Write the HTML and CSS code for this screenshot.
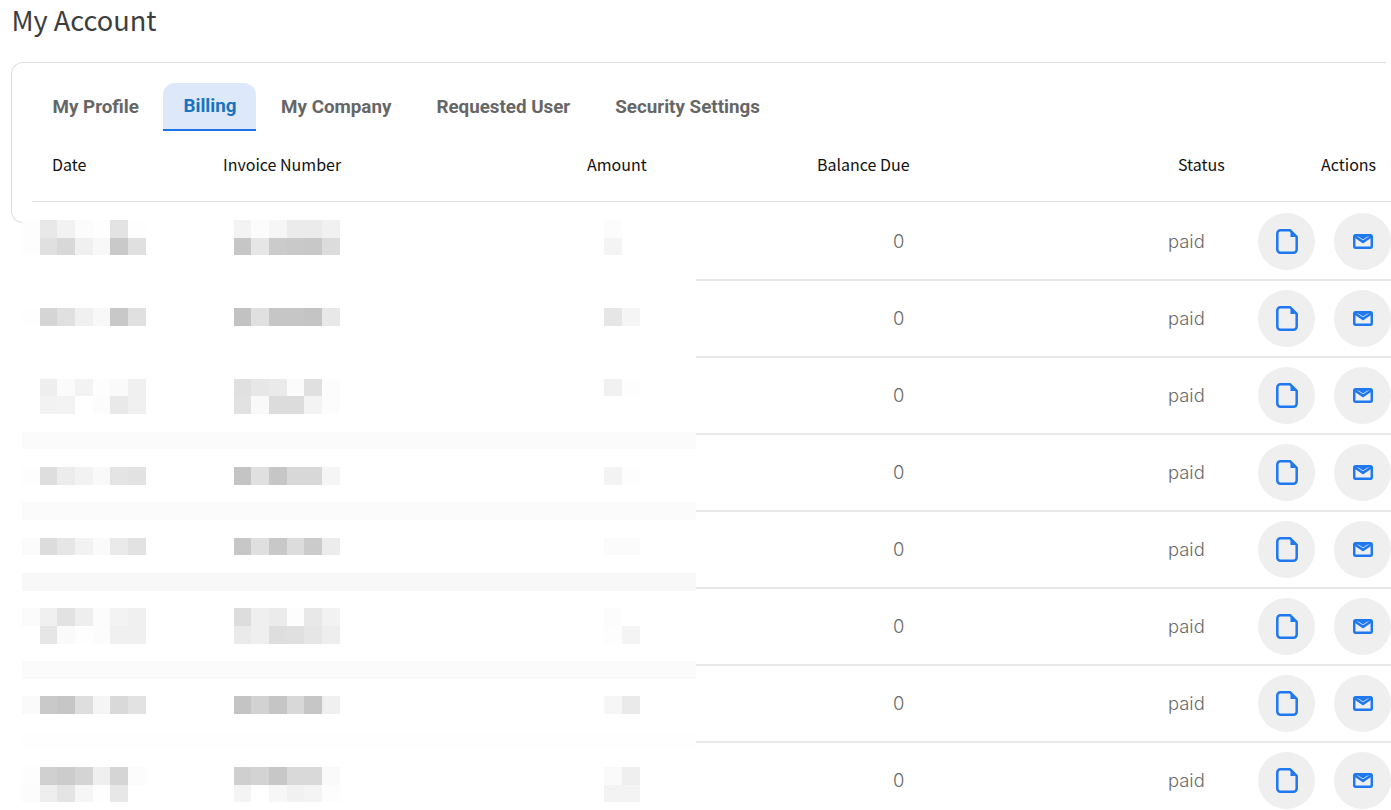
FILE: index.html
```html
<!DOCTYPE html>
<html lang="en">
<head>
<meta charset="utf-8">
<title>My Account</title>
<link rel="stylesheet" href="styles.css">
</head>
<body>
<svg class="defs" width="0" height="0" aria-hidden="true">
  <symbol id="doc" viewBox="0 0 22 25">
    <path class="ln" d="M4.500 1.300h9.700L20.700 7.800V20.500a3.200 3.200 0 0 1-3.200 3.200H4.500A3.200 3.200 0 0 1 1.300 20.500V4.500A3.200 3.200 0 0 1 4.500 1.300z"/>
    <path class="fl" d="M14.500 2.500L19.500 8H14.500z"/>
  </symbol>
  <symbol id="mail" viewBox="0 0 20 15">
    <rect class="ln" x="1.200" y="1.200" width="17.600" height="12.600" rx="1.500"/>
    <path class="ln" d="M2 2.500L10 7.900L18 2.500"/>
    <path class="fl" d="M4 1.500H16L10 5.500z"/>
  </symbol>
</svg>
<main class="page">
  <h1 class="title">My Account</h1>
  <section class="card">
    <nav class="tabs">
      <a class="tab">My Profile</a>
      <a class="tab active">Billing</a>
      <a class="tab">My Company</a>
      <a class="tab">Requested User</a>
      <a class="tab">Security Settings</a>
    </nav>
    <div class="table">
      <div class="head">
        <div>Date</div>
        <div>Invoice Number</div>
        <div>Amount</div>
        <div>Balance Due</div>
        <div class="h-status">Status</div>
        <div class="h-actions">Actions</div>
      </div>
      <div class="row"><div></div><div></div><div></div><div class="balance">0</div><div class="status">paid</div><div class="actions"><button class="action"><svg class="i-doc"><use href="#doc"/></svg></button><button class="action"><svg class="i-mail"><use href="#mail"/></svg></button></div></div>
      <div class="row"><div></div><div></div><div></div><div class="balance">0</div><div class="status">paid</div><div class="actions"><button class="action"><svg class="i-doc"><use href="#doc"/></svg></button><button class="action"><svg class="i-mail"><use href="#mail"/></svg></button></div></div>
      <div class="row"><div></div><div></div><div></div><div class="balance">0</div><div class="status">paid</div><div class="actions"><button class="action"><svg class="i-doc"><use href="#doc"/></svg></button><button class="action"><svg class="i-mail"><use href="#mail"/></svg></button></div></div>
      <div class="row"><div></div><div></div><div></div><div class="balance">0</div><div class="status">paid</div><div class="actions"><button class="action"><svg class="i-doc"><use href="#doc"/></svg></button><button class="action"><svg class="i-mail"><use href="#mail"/></svg></button></div></div>
      <div class="row"><div></div><div></div><div></div><div class="balance">0</div><div class="status">paid</div><div class="actions"><button class="action"><svg class="i-doc"><use href="#doc"/></svg></button><button class="action"><svg class="i-mail"><use href="#mail"/></svg></button></div></div>
      <div class="row"><div></div><div></div><div></div><div class="balance">0</div><div class="status">paid</div><div class="actions"><button class="action"><svg class="i-doc"><use href="#doc"/></svg></button><button class="action"><svg class="i-mail"><use href="#mail"/></svg></button></div></div>
      <div class="row"><div></div><div></div><div></div><div class="balance">0</div><div class="status">paid</div><div class="actions"><button class="action"><svg class="i-doc"><use href="#doc"/></svg></button><button class="action"><svg class="i-mail"><use href="#mail"/></svg></button></div></div>
      <div class="row"><div></div><div></div><div></div><div class="balance">0</div><div class="status">paid</div><div class="actions"><button class="action"><svg class="i-doc"><use href="#doc"/></svg></button><button class="action"><svg class="i-mail"><use href="#mail"/></svg></button></div></div>
    </div>
  </section>
  <svg class="mosaic" width="674" height="582" viewBox="0 0 674 582" aria-hidden="true">
    <g transform="translate(0,0)"><rect x="0" width="18" fill="#fdfdfd"/><rect x="18" width="17" fill="#e8e8e8"/><rect x="35" width="18" fill="#f2f2f2"/><rect x="53" width="18" fill="#fcfcfc"/><rect x="71" width="17" fill="#fefefe"/><rect x="88" width="18" fill="#e3e3e3"/><rect x="106" width="18" fill="#fefefe"/><rect x="212" width="17" fill="#f3f3f3"/><rect x="229" width="18" fill="#fcfcfc"/><rect x="247" width="18" fill="#f6f6f6"/><rect x="265" width="17" fill="#ebebeb"/><rect x="282" width="18" fill="#ebebeb"/><rect x="300" width="18" fill="#f1f1f1"/><rect x="582" width="18" fill="#fcfcfc"/></g>
    <g class="s" transform="translate(0,18)"><rect x="0" width="18" fill="#fdfdfd"/><rect x="18" width="17" fill="#e0e0e0"/><rect x="35" width="18" fill="#d8d8d8"/><rect x="53" width="18" fill="#f0f0f0"/><rect x="71" width="17" fill="#f8f8f8"/><rect x="88" width="18" fill="#c9c9c9"/><rect x="106" width="18" fill="#e0e0e0"/><rect x="212" width="17" fill="#c6c6c6"/><rect x="229" width="18" fill="#e6e6e6"/><rect x="247" width="18" fill="#cbcbcb"/><rect x="265" width="17" fill="#c9c9c9"/><rect x="282" width="18" fill="#c8c8c8"/><rect x="300" width="18" fill="#dcdcdc"/><rect x="582" width="18" fill="#f4f4f4"/></g>
    <g transform="translate(0,88)"><rect x="0" width="18" fill="#fefefe"/><rect x="18" width="17" fill="#d5d5d5"/><rect x="35" width="18" fill="#e0e0e0"/><rect x="53" width="18" fill="#f0f0f0"/><rect x="71" width="17" fill="#f8f8f8"/><rect x="88" width="18" fill="#c8c8c8"/><rect x="106" width="18" fill="#e0e0e0"/><rect x="212" width="17" fill="#c2c2c2"/><rect x="229" width="18" fill="#e0e0e0"/><rect x="247" width="18" fill="#c6c6c6"/><rect x="265" width="17" fill="#c6c6c6"/><rect x="282" width="18" fill="#c4c4c4"/><rect x="300" width="18" fill="#e8e8e8"/><rect x="582" width="18" fill="#e6e6e6"/><rect x="600" width="18" fill="#f5f5f5"/></g>
    <g class="s" transform="translate(0,159)"><rect x="18" width="17" fill="#eeeeee"/><rect x="35" width="18" fill="#fbfbfb"/><rect x="53" width="18" fill="#f3f3f3"/><rect x="71" width="17" fill="#fdfdfd"/><rect x="88" width="18" fill="#fafafa"/><rect x="106" width="18" fill="#f0f0f0"/><rect x="212" width="17" fill="#e0e0e0"/><rect x="229" width="18" fill="#e7e7e7"/><rect x="247" width="18" fill="#eaeaea"/><rect x="265" width="17" fill="#fbfbfb"/><rect x="282" width="18" fill="#e0e0e0"/><rect x="300" width="18" fill="#fcfcfc"/><rect x="582" width="18" fill="#f1f1f1"/><rect x="600" width="18" fill="#fdfdfd"/></g>
    <g transform="translate(0,176)"><rect x="18" width="17" fill="#f2f2f2"/><rect x="35" width="18" fill="#f3f3f3"/><rect x="71" width="17" fill="#fcfcfc"/><rect x="88" width="18" fill="#e9e9e9"/><rect x="106" width="18" fill="#f0f0f0"/><rect x="212" width="17" fill="#e2e2e2"/><rect x="229" width="18" fill="#f9f9f9"/><rect x="247" width="18" fill="#dcdcdc"/><rect x="265" width="17" fill="#dcdcdc"/><rect x="282" width="18" fill="#f3f3f3"/><rect x="300" width="18" fill="#fcfcfc"/></g>
    <g class="s" transform="translate(0,212)"><rect x="0" width="674" fill="#fbfbfb"/></g>
    <g transform="translate(0,247)"><rect x="0" width="18" fill="#fdfdfd"/><rect x="18" width="17" fill="#dedede"/><rect x="35" width="18" fill="#ececec"/><rect x="53" width="18" fill="#f2f2f2"/><rect x="71" width="17" fill="#f9f9f9"/><rect x="88" width="18" fill="#e4e4e4"/><rect x="106" width="18" fill="#e2e2e2"/><rect x="212" width="17" fill="#c4c4c4"/><rect x="229" width="18" fill="#e0e0e0"/><rect x="247" width="18" fill="#c6c6c6"/><rect x="265" width="17" fill="#d8d8d8"/><rect x="282" width="18" fill="#d8d8d8"/><rect x="300" width="18" fill="#f5f5f5"/><rect x="582" width="18" fill="#f3f3f3"/><rect x="600" width="18" fill="#fdfdfd"/></g>
    <g transform="translate(0,282)"><rect x="0" width="674" fill="#fbfbfb"/></g>
    <g class="s" transform="translate(0,318)"><rect x="0" width="18" fill="#fbfbfb"/><rect x="18" width="17" fill="#dcdcdc"/><rect x="35" width="18" fill="#e6e6e6"/><rect x="53" width="18" fill="#f2f2f2"/><rect x="71" width="17" fill="#fafafa"/><rect x="88" width="18" fill="#eaeaea"/><rect x="106" width="18" fill="#e2e2e2"/><rect x="212" width="17" fill="#c7c7c7"/><rect x="229" width="18" fill="#dfdfdf"/><rect x="247" width="18" fill="#c8c8c8"/><rect x="265" width="17" fill="#dcdcdc"/><rect x="282" width="18" fill="#cbcbcb"/><rect x="300" width="18" fill="#ececec"/><rect x="582" width="18" fill="#fbfbfb"/><rect x="600" width="18" fill="#fbfbfb"/></g>
    <g transform="translate(0,353)"><rect x="0" width="674" fill="#f8f8f8"/></g>
    <g transform="translate(0,388)"><rect x="0" width="18" fill="#fbfbfb"/><rect x="18" width="17" fill="#f0f0f0"/><rect x="35" width="18" fill="#e2e2e2"/><rect x="53" width="18" fill="#eeeeee"/><rect x="71" width="17" fill="#fcfcfc"/><rect x="88" width="18" fill="#f3f3f3"/><rect x="106" width="18" fill="#f0f0f0"/><rect x="212" width="17" fill="#dddddd"/><rect x="229" width="18" fill="#efefef"/><rect x="247" width="18" fill="#ebebeb"/><rect x="265" width="17" fill="#fdfdfd"/><rect x="282" width="18" fill="#e8e8e8"/><rect x="300" width="18" fill="#f2f2f2"/><rect x="582" width="18" fill="#fcfcfc"/></g>
    <g transform="translate(0,406)"><rect x="18" width="17" fill="#e6e6e6"/><rect x="35" width="18" fill="#fafafa"/><rect x="53" width="18" fill="#fefefe"/><rect x="71" width="17" fill="#fcfcfc"/><rect x="88" width="18" fill="#f0f0f0"/><rect x="106" width="18" fill="#f0f0f0"/><rect x="212" width="17" fill="#eaeaea"/><rect x="229" width="18" fill="#efefef"/><rect x="247" width="18" fill="#dedede"/><rect x="265" width="17" fill="#e0e0e0"/><rect x="282" width="18" fill="#e6e6e6"/><rect x="300" width="18" fill="#eeeeee"/><rect x="582" width="18" fill="#fdfdfd"/><rect x="600" width="18" fill="#f4f4f4"/></g>
    <g transform="translate(0,441)"><rect x="0" width="674" fill="#fbfbfb"/></g>
    <g transform="translate(0,476)"><rect x="0" width="18" fill="#fafafa"/><rect x="18" width="17" fill="#c9c9c9"/><rect x="35" width="18" fill="#c6c6c6"/><rect x="53" width="18" fill="#dedede"/><rect x="71" width="17" fill="#f5f5f5"/><rect x="88" width="18" fill="#d9d9d9"/><rect x="106" width="18" fill="#e2e2e2"/><rect x="212" width="17" fill="#c4c4c4"/><rect x="229" width="18" fill="#d2d2d2"/><rect x="247" width="18" fill="#c5c5c5"/><rect x="265" width="17" fill="#d8d8d8"/><rect x="282" width="18" fill="#c6c6c6"/><rect x="300" width="18" fill="#f0f0f0"/><rect x="582" width="18" fill="#f6f6f6"/><rect x="600" width="18" fill="#eaeaea"/></g>
    <g transform="translate(0,512)"><rect x="0" width="674" fill="#fefefe"/></g>
    <g transform="translate(0,547)"><rect x="0" width="18" fill="#fdfdfd"/><rect x="18" width="17" fill="#d0d0d0"/><rect x="35" width="18" fill="#cccccc"/><rect x="53" width="18" fill="#d4d4d4"/><rect x="71" width="17" fill="#efefef"/><rect x="88" width="18" fill="#d5d5d5"/><rect x="106" width="18" fill="#fcfcfc"/><rect x="212" width="17" fill="#cfcfcf"/><rect x="229" width="18" fill="#d3d3d3"/><rect x="247" width="18" fill="#c7c7c7"/><rect x="265" width="17" fill="#d9d9d9"/><rect x="282" width="18" fill="#d9d9d9"/><rect x="300" width="18" fill="#fafafa"/><rect x="582" width="18" fill="#fafafa"/><rect x="600" width="18" fill="#efefef"/></g>
    <g class="s" transform="translate(0,565)"><rect x="0" width="18" fill="#fcfcfc"/><rect x="18" width="17" fill="#eeeeee"/><rect x="35" width="18" fill="#e4e4e4"/><rect x="53" width="18" fill="#f6f6f6"/><rect x="71" width="17" fill="#fefefe"/><rect x="88" width="18" fill="#e7e7e7"/><rect x="212" width="17" fill="#f4f4f4"/><rect x="247" width="18" fill="#f7f7f7"/><rect x="265" width="17" fill="#f1f1f1"/><rect x="282" width="18" fill="#f4f4f4"/><rect x="300" width="18" fill="#fdfdfd"/><rect x="582" width="18" fill="#f3f3f3"/><rect x="600" width="18" fill="#f3f3f3"/></g>
  </svg>
</main>
</body>
</html>
```
FILE: styles.css
```css
html, body {
  margin: 0;
  padding: 0;
  background: #fff;
}

.defs {
  position: absolute;
}

.page {
  position: relative;
  width: 1391px;
  height: 810px;
  overflow: hidden;
}

.title {
  margin: 0 0 24px;
  padding-left: 11.500px;
  font: 400 27.200px/38px "Noto Sans CJK JP", sans-serif;
  color: #3d3d3d;
}

.card {
  box-sizing: border-box;
  width: 1375px;
  height: 161px;
  margin-left: 11px;
  padding: 20px 0 0 20px;
  border: 1px solid #dedede;
  border-right: 0;
  border-radius: 12px 0 0 12px;
}

.tabs {
  display: flex;
  gap: 4px;
  height: 48px;
}

.tab {
  box-sizing: border-box;
  display: flex;
  align-items: center;
  padding: 0 20.500px;
  font: 700 18.800px/1 Roboto, sans-serif;
  color: #666;
  white-space: nowrap;
}

.tab.active {
  padding: 0 19.500px 0 20px;
  margin-right: 0.500px;
  background: #dde9fa;
  color: #1a73bd;
  border-bottom: 2px solid #1a73e8;
  border-radius: 12px 12px 0 0;
}

.head,
.row {
  display: grid;
  grid-template-columns: 171px 364px 230px 351px 110px 133px;
  width: 1359px;
}

.head {
  box-sizing: border-box;
  height: 71px;
  padding-bottom: 5px;
  margin-bottom: 2px;
  align-items: center;
  border-bottom: 1px solid #dedede;
  font: 400 16px/20px "Noto Sans CJK JP", sans-serif;
  color: #111;
}

.head > div {
  padding-left: 20px;
}

.head > .h-status {
  padding-left: 30px;
}

.head > .h-actions {
  padding-left: 63px;
}

.row {
  height: 77px;
  box-sizing: border-box;
  align-items: center;
  background: #fff;
  border-bottom: 2px solid #e8e8e8;
  font: 300 18.400px/24px Inter, sans-serif;
  color: #6a6a6a;
}

.balance {
  padding: 0 0 2px 96px;
}

.status {
  padding: 0 0 1px 20px;
}

.actions {
  display: flex;
  gap: 19px;
}

.action {
  display: flex;
  align-items: center;
  justify-content: center;
  flex: none;
  width: 57px;
  height: 57px;
  padding: 0;
  border: 0;
  border-radius: 50%;
  background: #efefef;
}

.i-doc {
  width: 22px;
  height: 25px;
}

.i-mail {
  width: 20px;
  height: 15px;
}

.ln {
  fill: none;
  stroke: #1f78f0;
  stroke-width: 2.500;
  stroke-linejoin: round;
}

.fl {
  fill: #1f78f0;
}

.mosaic {
  position: absolute;
  left: 22px;
  top: 220px;
  background: #fff;
  shape-rendering: crispEdges;
}

.mosaic rect {
  height: 18px;
}

.mosaic .s rect {
  height: 17px;
}
```
